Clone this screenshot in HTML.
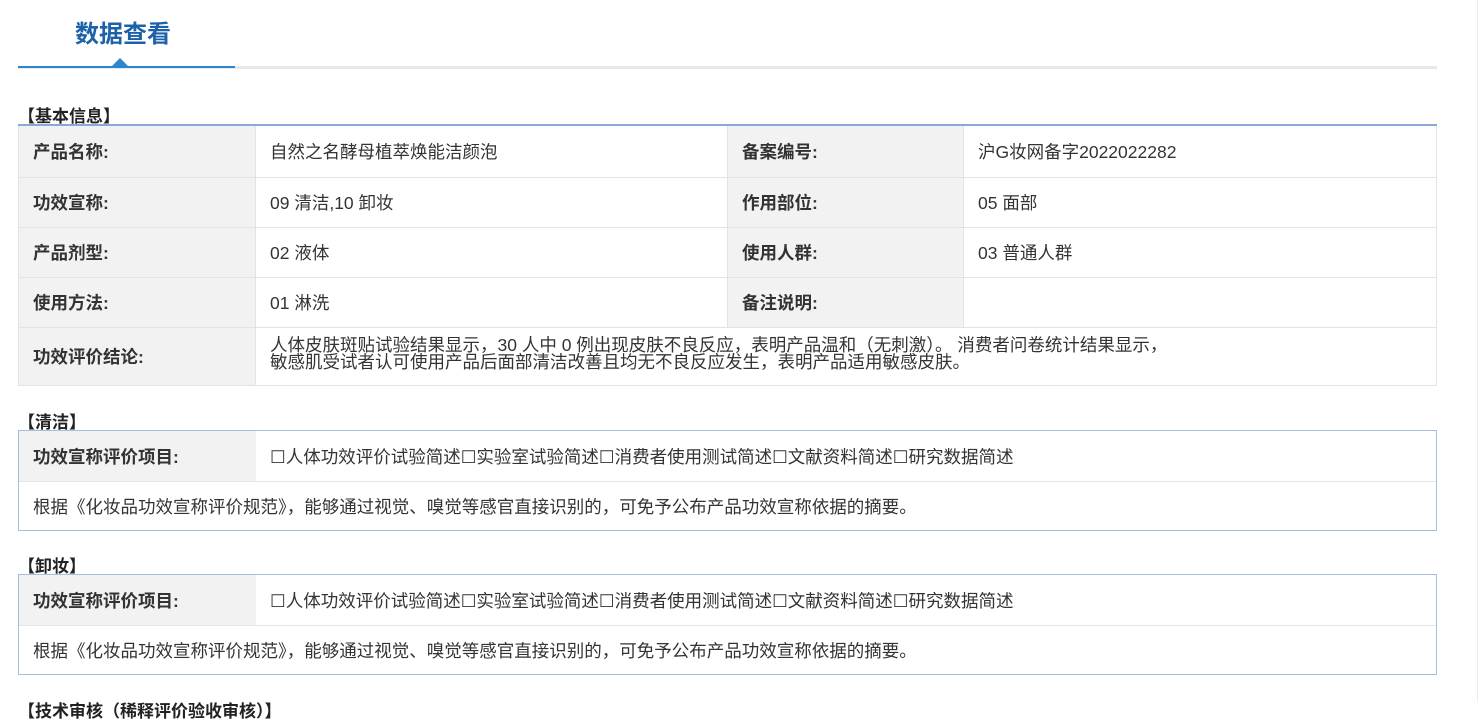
<!DOCTYPE html>
<html><head><meta charset="utf-8"><style>
*{margin:0;padding:0;box-sizing:border-box}
body{width:1479px;height:702px;overflow:hidden;background:#fff;font-family:"Liberation Sans","Noto Sans CJK SC",sans-serif;color:#333;position:relative}
.title{position:absolute;left:75px;top:14px;font-size:24px;font-weight:bold;color:#1d62a8}
.gl{position:absolute;left:18px;top:66px;width:1419px;height:3px;background:#e8e8e8}
.bl{position:absolute;left:18px;top:66px;width:217px;height:2px;background:#2e86d0}
.tri{position:absolute;left:112px;top:58px;width:0;height:0;border-left:8px solid transparent;border-right:8px solid transparent;border-bottom:8px solid #2e86d0}
.h{position:absolute;left:18px;font-size:17px;font-weight:bold;color:#222}
table{position:absolute;left:18px;width:1419px;border-collapse:collapse;font-size:17.5px}
td{border:1px solid #e3e3e3;padding:1px 14px 0;vertical-align:middle}
td.l{background:#f2f2f2;font-weight:bold;color:#333}
.t1{top:124px;border-top:2px solid #8aa8d8}
.box{position:absolute;left:18px;width:1419px;border:1px solid #a9bdd6}
.box table{position:static;width:100%}
.box td{border:none;border-bottom:1px solid #e6e6e6}
</style></head><body>
<div class="title">数据查看</div>
<div class="gl"></div><div class="bl"></div><div class="tri"></div>
<div class="h" style="top:102px">【基本信息】</div>
<table class="t1">
<colgroup><col style="width:237px"><col style="width:472px"><col style="width:236px"><col></colgroup>
<tr style="height:52px"><td class="l">产品名称:</td><td>自然之名酵母植萃焕能洁颜泡</td><td class="l">备案编号:</td><td>沪G妆网备字2022022282</td></tr>
<tr style="height:50px"><td class="l">功效宣称:</td><td>09 清洁,10 卸妆</td><td class="l">作用部位:</td><td>05 面部</td></tr>
<tr style="height:50px"><td class="l">产品剂型:</td><td>02 液体</td><td class="l">使用人群:</td><td>03 普通人群</td></tr>
<tr style="height:50px"><td class="l">使用方法:</td><td>01 淋洗</td><td class="l">备注说明:</td><td></td></tr>
<tr style="height:58px"><td class="l">功效评价结论:</td><td colspan="3" style="line-height:17px;padding-bottom:6px">人体皮肤斑贴试验结果显示，30 人中 0 例出现皮肤不良反应，表明产品温和（无刺激）。 消费者问卷统计结果显示，<br>敏感肌受试者认可使用产品后面部清洁改善且均无不良反应发生，表明产品适用敏感皮肤。</td></tr>
</table>
<div class="h" style="top:408px">【清洁】</div>
<div class="box" style="top:430px"><table><colgroup><col style="width:237px"><col></colgroup>
<tr style="height:50px"><td class="l">功效宣称评价项目:</td><td>☐人体功效评价试验简述☐实验室试验简述☐消费者使用测试简述☐文献资料简述☐研究数据简述</td></tr>
<tr style="height:49px"><td colspan="2" style="border-bottom:none">根据《化妆品功效宣称评价规范》，能够通过视觉、嗅觉等感官直接识别的，可免予公布产品功效宣称依据的摘要。</td></tr></table></div>
<div class="h" style="top:552px">【卸妆】</div>
<div class="box" style="top:574px"><table><colgroup><col style="width:237px"><col></colgroup>
<tr style="height:50px"><td class="l">功效宣称评价项目:</td><td>☐人体功效评价试验简述☐实验室试验简述☐消费者使用测试简述☐文献资料简述☐研究数据简述</td></tr>
<tr style="height:49px"><td colspan="2" style="border-bottom:none">根据《化妆品功效宣称评价规范》，能够通过视觉、嗅觉等感官直接识别的，可免予公布产品功效宣称依据的摘要。</td></tr></table></div>
<div class="h" style="top:697px">【技术审核（稀释评价验收审核）】</div>
<div style="position:absolute;right:1px;top:0;width:1px;height:702px;background:#eee"></div>
</body></html>
